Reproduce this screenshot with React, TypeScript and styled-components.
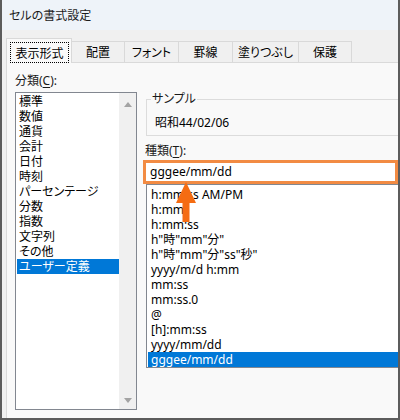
import React from 'react';
import styled, { createGlobalStyle } from 'styled-components';

const GlobalStyle = createGlobalStyle`
  html, body {
    margin: 0;
    padding: 0;
    background: #ffffff;
  }
`;

const Window = styled.div`
  position: relative;
  width: 400px;
  height: 420px;
  box-sizing: border-box;
  border: 2px solid #5c5c5c;
  border-top: none;
  background: #f0f0f0;
  display: flex;
  flex-direction: column;
  overflow: hidden;
  font-family: "Noto Sans", "Noto Sans CJK JP", sans-serif;
  font-size: 12px;
  font-feature-settings: "palt";
  color: #000;
`;

const TitleBar = styled.div`
  flex: none;
  height: 30px;
  background: #eef3f9;
  display: flex;
  align-items: center;
  padding-left: 7px;
  color: #1b1b1b;
`;

const Body = styled.div`
  flex: 1;
  display: flex;
  flex-direction: column;
  padding-left: 4px;
  min-height: 0;
`;

const TabStrip = styled.div`
  flex: none;
  height: 32px;
  display: flex;
  align-items: flex-end;
  position: relative;
  z-index: 1;
`;

const Tab = styled.div<{ $active?: boolean; $w: number }>`
  box-sizing: border-box;
  width: ${({ $w }) => $w}px;
  height: ${({ $active }) => ($active ? 25 : 21)}px;
  margin-bottom: ${({ $active }) => ($active ? -1 : 0)}px;
  border: 1px solid #d9d9d9;
  border-bottom: none;
  background: ${({ $active }) => ($active ? '#f9f9f9' : '#f0f0f0')};
  display: flex;
  align-items: center;
  justify-content: center;
  padding: ${({ $active }) => ($active ? '3px 2px 0 3px' : '0')};
  align-items: ${({ $active }) => ($active ? 'flex-start' : 'center')};

  & + & {
    margin-left: -1px;
  }
`;

const FocusRing = styled.span`
  flex: 1;
  height: 21px;
  box-sizing: border-box;
  border: 1px dotted #000;
  display: flex;
  align-items: center;
  justify-content: center;
`;

const Panel = styled.div`
  flex: 1;
  display: flex;
  gap: 8px;
  background: #f9f9f9;
  border-top: 1px solid #dadada;
  border-left: 1px solid #dadada;
  padding: 10px 0 0 8px;
  min-height: 0;
`;

const LeftCol = styled.div`
  flex: none;
  width: 122px;
  display: flex;
  flex-direction: column;
`;

const RightCol = styled.div`
  flex: none;
  width: 300px;
  display: flex;
  flex-direction: column;
  padding-top: 18px;
`;

const Label = styled.div`
  line-height: 16px;
  color: #1a1a1a;

  u {
    text-decoration-thickness: 1px;
    text-underline-offset: 2px;
  }
`;

const CategoryLabel = styled(Label)`
  margin-bottom: 3px;
`;

const TypeLabel = styled(Label)`
  margin-top: 7px;
`;

const CategoryBox = styled.div`
  box-sizing: border-box;
  height: 318px;
  border: 1px solid #828790;
  background: #fff;
  display: flex;
`;

const Rows = styled.div`
  flex: 1;
  padding: 1px 0 0 1px;
  min-width: 0;
`;

const Row = styled.div<{ $selected?: boolean; $indent: number }>`
  height: 15px;
  line-height: 15px;
  padding-left: ${({ $indent }) => $indent}px;
  white-space: nowrap;
  background: ${({ $selected }) => ($selected ? '#0078d7' : 'transparent')};
  color: ${({ $selected }) => ($selected ? '#fff' : '#000')};
`;

const ScrollBar = styled.div`
  flex: none;
  width: 17px;
  background: #f0f0f0;
  display: flex;
  flex-direction: column;
  justify-content: space-between;
  align-items: center;
  padding: 9px 0 6px;
  box-sizing: border-box;
`;

const SampleBox = styled.fieldset`
  margin: 0 0 0 1px;
  padding: 0 0 4px 4px;
  border: 1px solid #dcdcdc;
  min-width: 0;
`;

const Legend = styled.legend`
  padding: 0 1px;
  line-height: 16px;
  color: #1a1a1a;
`;

const SampleText = styled.div`
  margin: 8px 0 0 4px;
  line-height: 16px;
`;

const FormatInput = styled.div`
  box-sizing: border-box;
  width: 255px;
  height: 24px;
  margin: 1px 0 0 -2px;
  border: 3px solid #f28b43;
  background: #fff;
  padding-left: 4px;
  line-height: 18px;
`;

const FormatList = styled.div`
  box-sizing: border-box;
  height: 184px;
  margin-left: 1px;
  border: 1px solid #828790;
  border-right: none;
  background: #fff;
  padding: 2px 0 0 1px;
`;

const Arrow = styled.svg`
  position: absolute;
  left: 174px;
  top: 182px;
`;

const tabs = [
  { label: '表示形式', w: 66 },
  { label: '配置', w: 54 },
  { label: 'フォント', w: 55 },
  { label: '罫線', w: 55 },
  { label: '塗りつぶし', w: 67 },
  { label: '保護', w: 54 },
];

const categories = [
  '標準', '数値', '通貨', '会計', '日付', '時刻', 'パーセンテージ',
  '分数', '指数', '文字列', 'その他', 'ユーザー定義',
];

const formats = [
  'h:mm:ss AM/PM',
  'h:mm',
  'h:mm:ss',
  'h"時"mm"分"',
  'h"時"mm"分"ss"秒"',
  'yyyy/m/d h:mm',
  'mm:ss',
  'mm:ss.0',
  '@',
  '[h]:mm:ss',
  'yyyy/mm/dd',
  'gggee/mm/dd',
];

const Triangle = ({ down }: { down?: boolean }) => (
  <svg width="8" height="5" viewBox="0 0 8 5">
    <polygon points={down ? '0,0 8,0 4,5' : '4,0 8,5 0,5'} fill="#a3a3a3" />
  </svg>
);

export default function App() {
  return (
    <>
      <GlobalStyle />
      <Window>
        <TitleBar>セルの書式設定</TitleBar>
        <Body>
          <TabStrip>
            {tabs.map((t, i) => (
              <Tab key={t.label} $w={t.w} $active={i === 0}>
                {i === 0 ? <FocusRing>{t.label}</FocusRing> : t.label}
              </Tab>
            ))}
          </TabStrip>
          <Panel>
            <LeftCol>
              <CategoryLabel>分類(<u>C</u>):</CategoryLabel>
              <CategoryBox>
                <Rows>
                  {categories.map((c) => (
                    <Row key={c} $indent={2} $selected={c === 'ユーザー定義'}>{c}</Row>
                  ))}
                </Rows>
                <ScrollBar>
                  <Triangle />
                  <Triangle down />
                </ScrollBar>
              </CategoryBox>
            </LeftCol>
            <RightCol>
              <SampleBox>
                <Legend>サンプル</Legend>
                <SampleText>昭和44/02/06</SampleText>
              </SampleBox>
              <TypeLabel>種類(<u>T</u>):</TypeLabel>
              <FormatInput>gggee/mm/dd</FormatInput>
              <FormatList>
                {formats.map((f) => (
                  <Row key={f} $indent={3} $selected={f === 'gggee/mm/dd'}>{f}</Row>
                ))}
              </FormatList>
            </RightCol>
          </Panel>
        </Body>
        <Arrow width="20" height="40" viewBox="0 0 20 40">
          <polygon points="10,0 20,21 13.5,21 13.5,40 6.5,40 6.5,21 0,21" fill="#f56c12" />
        </Arrow>
      </Window>
    </>
  );
}
